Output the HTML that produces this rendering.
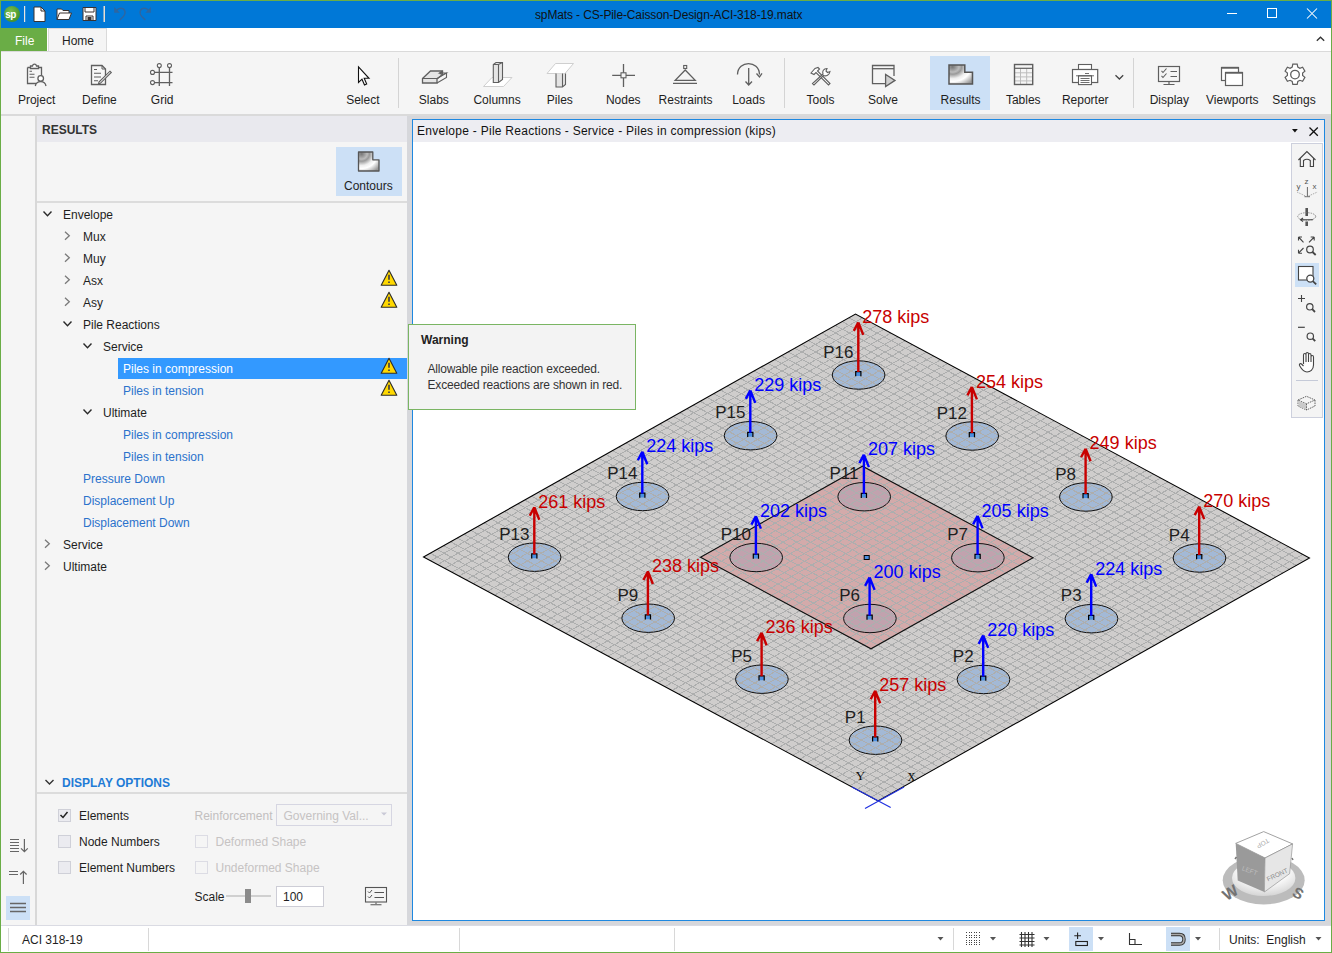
<!DOCTYPE html>
<html><head><meta charset="utf-8">
<style>
*{box-sizing:border-box;margin:0;padding:0}
html,body{width:1332px;height:953px;overflow:hidden}
body{position:relative;background:#6aad46;font-family:"Liberation Sans",sans-serif;font-size:12px;color:#1e1e1e}
.a{position:absolute}
.t{position:absolute;white-space:nowrap;line-height:1}
svg{position:absolute;overflow:visible}
</style></head><body>
<!-- title bar -->
<div class="a" style="left:1px;top:1px;width:1330px;height:27px;background:#0078d7"></div>
<div class="t" style="left:535px;top:9px;font-size:12px;color:#111;letter-spacing:-0.13px">spMats - CS-Pile-Caisson-Design-ACI-318-19.matx</div>

<!-- titlebar icons -->
<svg style="left:0;top:0" width="160" height="28">
 <defs><radialGradient id="lg" cx="0.4" cy="0.35" r="0.7"><stop offset="0" stop-color="#7cc04f"/><stop offset="1" stop-color="#3f8f2a"/></radialGradient></defs>
 <circle cx="12" cy="14" r="8" fill="url(#lg)"/>
 <text x="5.2" y="17.5" font-size="10" font-weight="bold" fill="#fff" letter-spacing="-0.6">sp</text>
 <rect x="24" y="6" width="1.2" height="16" fill="#e8e4e0"/>
 <path d="M34 7H41L45 11V21.5H34Z" fill="#fff" stroke="#3a3330" stroke-width="1"/>
 <path d="M41 7V11H45" fill="none" stroke="#3a3330" stroke-width="1"/>
 <path d="M57 19.5V9H61.5L63 10.5H69V13" fill="#fff" stroke="#3a3330" stroke-width="1"/>
 <path d="M57 19.5L59.5 13H71.5L69 19.5Z" fill="#fff" stroke="#3a3330" stroke-width="1"/>
 <path d="M83 7.5H96V20.5H83Z" fill="#fff" stroke="#3a3330" stroke-width="1"/>
 <path d="M85 7.5V12H94V7.5M86 20.5V16H93V20.5" fill="none" stroke="#3a3330" stroke-width="1"/>
 <rect x="87.5" y="17" width="4" height="3.5" fill="#3a3330"/>
 <rect x="103.5" y="6" width="1.5" height="16" fill="#e8dcd0"/>
 <path d="M119.8 20L123.3 16.5C126.5 13 125 8.3 120.6 8.3C118.6 8.3 117.3 9.5 116.3 10.8" fill="none" stroke="#2e66a0" stroke-width="1.4"/>
 <path d="M114.2 7V12.8H119.8Z" fill="#2e66a0"/>
 <path d="M145.3 20L141.8 16.5C138.6 13 140.1 8.3 144.5 8.3C146.5 8.3 147.8 9.5 148.8 10.8" fill="none" stroke="#2e66a0" stroke-width="1.4"/>
 <path d="M150.9 7V12.8H145.3Z" fill="#2e66a0"/>
</svg>
<svg style="left:1220px;top:0" width="112" height="28">
 <path d="M7 13.5H17" stroke="#fff" stroke-width="1"/>
 <rect x="47.5" y="8.5" width="9" height="9" fill="none" stroke="#fff" stroke-width="1"/>
 <path d="M87 8.5L97 18.5M97 8.5L87 18.5" stroke="#fff" stroke-width="1.05"/>
</svg>
<!-- tab row -->
<div class="a" style="left:1px;top:28px;width:1330px;height:23px;background:#fff"></div>
<div class="a" style="left:1px;top:28px;width:46px;height:23px;background:#6aad46"></div>
<div class="t" style="left:15px;top:35px;color:#fff;font-size:12px">File</div>
<div class="a" style="left:48px;top:28px;width:59px;height:24px;background:#f5f5f5;border:1px solid #dadada;border-bottom:none"></div>
<div class="t" style="left:62px;top:35px;font-size:12px">Home</div>
<svg style="left:1310px;top:28px" width="20" height="23">
 <path d="M6.8 12.8L10.5 9.2L14.2 12.8" fill="none" stroke="#333" stroke-width="1.3"/>
</svg>
<!-- ribbon -->
<div class="a" style="left:1px;top:51px;width:1330px;height:63px;background:#f5f5f5;border-top:1px solid #dadada"></div>
<div class="a" style="left:1px;top:114px;width:1330px;height:2px;background:#dadada"></div>

<!-- ribbon content -->
<div class="a" style="left:930px;top:56px;width:60px;height:54px;background:#cce0f6"></div>
<div class="a" style="left:398px;top:58px;width:1px;height:50px;background:#d4d4d4"></div>
<div class="a" style="left:784px;top:58px;width:1px;height:50px;background:#d4d4d4"></div>
<div class="a" style="left:1133px;top:58px;width:1px;height:50px;background:#d4d4d4"></div>
<div class="t" style="left:17.9px;top:94px">Project</div>
<div class="t" style="left:82.1px;top:94px">Define</div>
<div class="t" style="left:150.8px;top:94px">Grid</div>
<div class="t" style="left:346.2px;top:94px">Select</div>
<div class="t" style="left:418.8px;top:94px">Slabs</div>
<div class="t" style="left:473.4px;top:94px">Columns</div>
<div class="t" style="left:546.8px;top:94px">Piles</div>
<div class="t" style="left:605.9px;top:94px">Nodes</div>
<div class="t" style="left:658.6px;top:94px">Restraints</div>
<div class="t" style="left:732.2px;top:94px">Loads</div>
<div class="t" style="left:806.5px;top:94px">Tools</div>
<div class="t" style="left:868.0px;top:94px">Solve</div>
<div class="t" style="left:940.6px;top:94px">Results</div>
<div class="t" style="left:1005.9px;top:94px">Tables</div>
<div class="t" style="left:1061.9px;top:94px">Reporter</div>
<div class="t" style="left:1149.7px;top:94px">Display</div>
<div class="t" style="left:1206.0px;top:94px">Viewports</div>
<div class="t" style="left:1272.3px;top:94px">Settings</div>
<svg style="left:0;top:0" width="1332" height="116" fill="none" stroke="#5f5f5f" stroke-width="1.3">
 <!-- project -->
 <path d="M27.5 67.5H30.5M38.5 67.5H41.5V77M36 83.5H27.5V67.5" />
 <path d="M30.5 68.5V66H32.5C33 63.5 36 63.5 36.5 66H38.5V68.5Z" fill="#fff"/>
 <path d="M29.5 71.2H32M29.5 74.2H34.5M29.5 77.2H34.5" stroke-width="1.1"/>
 <circle cx="40.7" cy="78.4" r="2.8" fill="#fff"/>
 <path d="M35.3 86C36 82.5 38.5 81.7 40.7 81.7C43 81.7 45.3 82.5 46 86"/>
 <!-- define -->
 <path d="M91.5 65.5H102L105.5 69V84.5H91.5Z" fill="#f7f7f7"/>
 <path d="M102 65.5V69H105.5" stroke-width="1"/>
 <path d="M94 69.5H97M94 73.2H101M94 77H101M94 80.8H98" stroke-width="1.1"/>
 <path d="M99 82L110 71.2L111.3 72.5L100.3 83.3L98.5 83.8Z" fill="#fff" stroke-width="1.1"/>
 <!-- grid -->
 <path d="M159.3 68V86M169.5 68V86M154.5 72.4H172.5M154.5 82.6H172.5"/>
 <circle cx="159.3" cy="65.6" r="2" fill="#fff" stroke-width="1.1"/>
 <circle cx="169.5" cy="65.6" r="2" fill="#fff" stroke-width="1.1"/>
 <circle cx="152.5" cy="72.4" r="2" fill="#fff" stroke-width="1.1"/>
 <circle cx="152.5" cy="82.6" r="2" fill="#fff" stroke-width="1.1"/>
 <!-- select -->
 <path d="M358.5 67V82.5L362 79.2L364.5 85L366.7 84L364.2 78.3H369Z" fill="#fff" stroke="#111" stroke-width="1.1"/>
 <!-- slabs -->
 <path d="M422.5 78.5L430.5 71H442.5V74.5L437 79V83H422.5Z" fill="#e4e4e4"/>
 <path d="M422.5 78.5H437L446.5 73V77.5L437 83M437 79V78.5M442.5 71V74.5L439.5 73.5M437 78.5L446.5 73H439.5L442.5 71" fill="none" stroke-width="1.1"/>
 <!-- columns -->
 <path d="M483.5 86.5L492 77.5H512L503.5 86.5Z" fill="#fff" stroke="#cfcfcf" stroke-width="1"/>
 <path d="M493.3 64.5V82.5H498.5L502.5 79.5V62.5H496Z" fill="#e4e4e4" stroke-width="1.1"/>
 <path d="M493.3 64.5H498.5L502.5 62.5M498.5 64.5V82.5" stroke-width="1.1"/>
 <!-- piles -->
 <path d="M547 73.5L555.5 63.5H573.5L565 73.5Z" fill="#fff" stroke="#cfcfcf" stroke-width="1"/>
 <path d="M556 73.5V87H562.5L565.5 84.5V73.5" fill="#e4e4e4" stroke-width="1.1"/>
 <path d="M562.5 73.5V87" stroke-width="1.1"/>
 <!-- nodes -->
 <path d="M623.5 64V72.8M623.5 78V87M612.2 75.4H621M626 75.4H635"/>
 <rect x="621" y="72.8" width="5" height="5" stroke-width="1.1"/>
 <!-- restraints -->
 <rect x="683.7" y="65.5" width="3" height="3" stroke-width="1.1"/>
 <path d="M685.2 70L675.2 80.3H695.2Z M673 83.4H697"/>
 <!-- loads -->
 <path d="M737.5 74.5C738 60 759 60 759.5 74.5" />
 <path d="M756.5 73.5L759.5 77L762 73.3M748.7 68V84.5M745.5 81.5L748.7 85L752 81.5"/>
 <!-- tools -->
 <path d="M811 73L815 68.5L818 67.5L819.5 69L817.5 71L830 83.5L828.5 85L816 72.5L814 74.5Z" fill="#fff" stroke-width="1.1"/>
 <path d="M812.5 83.5L814 85L823.5 75.5C826 76.5 829.5 75 830 71.5L827.5 72.5L826 71L827 68.5C823.5 68.5 822 71.5 823 74Z" fill="#fff" stroke-width="1.1"/>
 <!-- solve -->
 <path d="M885.5 83.7H872.5V65.5H894V76" />
 <path d="M872.5 68.7H894" />
 <path d="M885.6 74.4V86.5L895 80.4Z" fill="#cfcfcf"/>
 <!-- results -->
 <defs><radialGradient id="rg" cx="0.15" cy="0.1" r="1.1"><stop offset="0" stop-color="#777"/><stop offset="0.25" stop-color="#bbb"/><stop offset="0.35" stop-color="#999"/><stop offset="0.55" stop-color="#eee"/><stop offset="0.7" stop-color="#fff"/><stop offset="0.85" stop-color="#ccc"/><stop offset="1" stop-color="#999"/></radialGradient></defs>
 <path d="M949 65H964.8V72.3H972.5V84H949Z" fill="url(#rg)" stroke="#555" stroke-width="1.5"/>
 <!-- tables -->
 <path d="M1020.5 68.5V84M1026.7 68.5V84M1014.5 72.8H1032.5M1014.5 76.9H1032.5M1014.5 80.9H1032.5" stroke="#bdbdbd" stroke-width="1"/>
 <rect x="1014.5" y="64.5" width="18.2" height="20" stroke-width="1.4"/>
 <path d="M1014.5 68.3H1032.5" stroke-width="1.2"/>
 <!-- reporter -->
 <rect x="1078.5" y="64.5" width="13" height="5" fill="#fff" stroke-width="1.1"/>
 <rect x="1072.5" y="69.5" width="25.2" height="13" fill="#fff" stroke-width="1.2"/>
 <rect x="1078.5" y="75.8" width="13" height="8.8" fill="#fff" stroke-width="1.1"/>
 <path d="M1076 75.8H1094M1085 73.5H1089M1080.5 78.5H1089.5M1080.5 80.5H1089.5M1080.5 82.5H1089.5" stroke-width="0.9"/>
 <path d="M1115.5 75.2L1119.4 79L1123.2 75.2" stroke="#444" stroke-width="1.3"/>
 <!-- display -->
 <rect x="1158.5" y="66.5" width="21" height="15" stroke-width="1.2"/>
 <path d="M1169 82V84M1163.5 84.5H1174.5M1170.5 71.5H1177M1170.5 76.5H1177" stroke-width="1.2"/>
 <path d="M1161.5 70.8L1163 72.5L1166.5 68.5M1161.5 75.8L1163 77.5L1166.5 73.5" stroke-width="1.1"/>
 <!-- viewports -->
 <rect x="1221.5" y="67.5" width="17" height="13" fill="#fff" stroke-width="1.2"/>
 <path d="M1221.5 67.8H1238.5" stroke-width="1.8"/>
 <rect x="1225.5" y="72.5" width="17" height="13" fill="#fff" stroke-width="1.2"/>
 <path d="M1225.5 72.8H1242.5" stroke-width="1.8"/>
 <!-- settings -->
 <path d="M1292.8 64.2H1297.2L1297.8 67.1L1299.9 68.3L1302.6 67.3L1304.9 71.1L1302.6 73.0V75.5L1304.9 77.4L1302.6 81.3L1299.9 80.3L1297.8 81.5L1297.2 84.4H1292.8L1292.2 81.5L1290.1 80.3L1287.4 81.3L1285.1 77.4L1287.4 75.5V73.0L1285.1 71.1L1287.4 67.3L1290.1 68.3L1292.2 67.1Z" fill="#fff" stroke-width="1.2"/>
 <circle cx="1295" cy="74.6" r="4.3" stroke-width="1.3"/>
</svg>
<!-- workspace grey -->
<div class="a" style="left:1px;top:116px;width:1330px;height:809px;background:#d6d7db"></div>
<!-- left strip -->
<div class="a" style="left:1px;top:116px;width:34px;height:809px;background:#f5f5f5"></div>
<!-- panel -->
<div class="a" style="left:37px;top:116px;width:370px;height:809px;background:#f5f5f5"></div>
<div class="a" style="left:37px;top:116px;width:370px;height:26px;background:#e9e9ee"></div>
<div class="t" style="left:42px;top:124px;font-weight:bold;font-size:12px;color:#333">RESULTS</div>
<!-- panel content -->
<div class="a" style="left:336px;top:147px;width:66px;height:49px;background:#cce0f6"></div>
<div class="t" style="left:344px;top:179.5px">Contours</div>
<div class="a" style="left:37px;top:201px;width:370px;height:2px;background:#dcdcdc"></div>
<div class="t" style="left:63px;top:208.8px;color:#1e1e1e">Envelope</div>
<div class="t" style="left:83px;top:230.8px;color:#1e1e1e">Mux</div>
<div class="t" style="left:83px;top:252.8px;color:#1e1e1e">Muy</div>
<div class="t" style="left:83px;top:274.8px;color:#1e1e1e">Asx</div>
<div class="t" style="left:83px;top:296.8px;color:#1e1e1e">Asy</div>
<div class="t" style="left:83px;top:318.8px;color:#1e1e1e">Pile Reactions</div>
<div class="t" style="left:103px;top:340.8px;color:#1e1e1e">Service</div>
<div class="a" style="left:118px;top:358px;width:289px;height:21px;background:#3399ff"></div>
<div class="t" style="left:123px;top:362.8px;color:#fff">Piles in compression</div>
<div class="t" style="left:123px;top:384.8px;color:#2b72cc">Piles in tension</div>
<div class="t" style="left:103px;top:406.8px;color:#1e1e1e">Ultimate</div>
<div class="t" style="left:123px;top:428.8px;color:#2b72cc">Piles in compression</div>
<div class="t" style="left:123px;top:450.8px;color:#2b72cc">Piles in tension</div>
<div class="t" style="left:83px;top:472.8px;color:#2b72cc">Pressure Down</div>
<div class="t" style="left:83px;top:494.8px;color:#2b72cc">Displacement Up</div>
<div class="t" style="left:83px;top:516.8px;color:#2b72cc">Displacement Down</div>
<div class="t" style="left:63px;top:538.8px;color:#1e1e1e">Service</div>
<div class="t" style="left:63px;top:560.8px;color:#1e1e1e">Ultimate</div>
<svg style="left:0;top:0" width="410" height="600" fill="none">
<defs><radialGradient id="rg2" cx="0.15" cy="0.1" r="1.1"><stop offset="0" stop-color="#777"/><stop offset="0.25" stop-color="#bbb"/><stop offset="0.35" stop-color="#999"/><stop offset="0.55" stop-color="#eee"/><stop offset="0.7" stop-color="#fff"/><stop offset="0.85" stop-color="#ccc"/><stop offset="1" stop-color="#999"/></radialGradient></defs>
<path d="M358.5 152H372.8V159.8H379V171H358.5Z" fill="url(#rg2)" stroke="#555" stroke-width="1.3" stroke-linejoin="round"/>
<path d="M43.5 211.5L47.5 215.7L51.5 211.5" stroke="#2a2a2a" stroke-width="1.4"/>
<path d="M65.0 231.7L69.3 235.7L65.0 239.7" stroke="#7a7a7a" stroke-width="1.3"/>
<path d="M65.0 253.7L69.3 257.7L65.0 261.7" stroke="#7a7a7a" stroke-width="1.3"/>
<path d="M65.0 275.7L69.3 279.7L65.0 283.7" stroke="#7a7a7a" stroke-width="1.3"/>
<path d="M389 270.3L396.8 285.3H381.2Z" fill="#ffd800" stroke="#2b2b2b" stroke-width="1.1" stroke-linejoin="round"/>
<path d="M389 274.7V279.7M389 281.6V283.0" stroke="#1d2350" stroke-width="1.4"/>
<path d="M65.0 297.7L69.3 301.7L65.0 305.7" stroke="#7a7a7a" stroke-width="1.3"/>
<path d="M389 292.3L396.8 307.3H381.2Z" fill="#ffd800" stroke="#2b2b2b" stroke-width="1.1" stroke-linejoin="round"/>
<path d="M389 296.7V301.7M389 303.6V305.0" stroke="#1d2350" stroke-width="1.4"/>
<path d="M63.5 321.5L67.5 325.7L71.5 321.5" stroke="#2a2a2a" stroke-width="1.4"/>
<path d="M83.5 343.5L87.5 347.7L91.5 343.5" stroke="#2a2a2a" stroke-width="1.4"/>
<path d="M389 358.3L396.8 373.3H381.2Z" fill="#ffd800" stroke="#2b2b2b" stroke-width="1.1" stroke-linejoin="round"/>
<path d="M389 362.7V367.7M389 369.6V371.0" stroke="#1d2350" stroke-width="1.4"/>
<path d="M389 380.3L396.8 395.3H381.2Z" fill="#ffd800" stroke="#2b2b2b" stroke-width="1.1" stroke-linejoin="round"/>
<path d="M389 384.7V389.7M389 391.6V393.0" stroke="#1d2350" stroke-width="1.4"/>
<path d="M83.5 409.5L87.5 413.7L91.5 409.5" stroke="#2a2a2a" stroke-width="1.4"/>
<path d="M45.0 539.7L49.3 543.7L45.0 547.7" stroke="#7a7a7a" stroke-width="1.3"/>
<path d="M45.0 561.7L49.3 565.7L45.0 569.7" stroke="#7a7a7a" stroke-width="1.3"/>
</svg>

<!-- display options -->
<div class="t" style="left:62px;top:776.5px;font-weight:bold;color:#1f7bd6">DISPLAY OPTIONS</div>
<div class="a" style="left:37px;top:792px;width:370px;height:2px;background:#dcdcdc"></div>
<div class="a" style="left:58px;top:808.5px;width:13px;height:13px;background:#ebebf0;border:1px solid #cfd0d8"></div>
<div class="a" style="left:58px;top:834.5px;width:13px;height:13px;background:#ebebf0;border:1px solid #cfd0d8"></div>
<div class="a" style="left:58px;top:860.5px;width:13px;height:13px;background:#ebebf0;border:1px solid #cfd0d8"></div>
<div class="t" style="left:79px;top:809.8px">Elements</div>
<div class="t" style="left:79px;top:835.5px">Node Numbers</div>
<div class="t" style="left:79px;top:862.3px">Element Numbers</div>
<div class="t" style="left:194.5px;top:809.7px;color:#c2bfbf">Reinforcement</div>
<div class="a" style="left:276px;top:804px;width:116px;height:22px;border:1px solid #d6d6e2"></div>
<div class="t" style="left:283.5px;top:809.7px;color:#c6c3c3">Governing Val...</div>
<div class="a" style="left:195px;top:834.5px;width:13px;height:13px;border:1px solid #dcdce4"></div>
<div class="a" style="left:195px;top:860.5px;width:13px;height:13px;border:1px solid #dcdce4"></div>
<div class="t" style="left:215.5px;top:836.3px;color:#c6c3c3">Deformed Shape</div>
<div class="t" style="left:215.5px;top:861.5px;color:#c6c3c3">Undeformed Shape</div>
<div class="t" style="left:194.5px;top:890.5px">Scale</div>
<div class="a" style="left:226px;top:895px;width:45px;height:2px;background:#d0d0d0"></div>
<div class="a" style="left:245px;top:889px;width:6px;height:14px;background:#8b8b8b"></div>
<div class="a" style="left:276px;top:885.5px;width:48px;height:21.5px;background:#fff;border:1px solid #cdcdd6"></div>
<div class="t" style="left:283px;top:890.5px">100</div>
<!-- left strip -->
<div class="a" style="left:6px;top:896px;width:24px;height:24px;background:#cce0f6"></div>
<svg style="left:0;top:760px" width="410" height="170" fill="none">
 <path d="M45.5 20L49.5 24L53.5 20" stroke="#333" stroke-width="1.4"/>
 <path d="M60.5 55L63 57.5L67.5 52" stroke="#222" stroke-width="1.5"/>
 <path d="M381 52.5L384 55.5L387 52.5Z" fill="#c9c9d6"/>
 <path d="M10 79.5H19M10 82.5H19M10 85.5H19M10 88.5H19M10 91.5H19" stroke="#666" stroke-width="1.2"/>
 <path d="M24.4 79V92M21 88.3L24.4 91.7L27.8 88.3" stroke="#666" stroke-width="1.2"/>
 <path d="M9 111.5H18M9 114.5H18" stroke="#666" stroke-width="1.2"/>
 <path d="M23.4 111.5V124M20.2 114.5L23.4 111.3L26.6 114.5" stroke="#666" stroke-width="1.2"/>
 <path d="M10 143.5H26M10 147.5H26M10 151.5H26" stroke="#666" stroke-width="1.4"/>
 <rect x="365.5" y="127.5" width="21" height="14.5" stroke="#555" stroke-width="1.1"/>
 <path d="M376 142.5V144M370.5 144.8H381.5M374.5 132.5H384M374.5 137.5H384" stroke="#555" stroke-width="1.1"/>
 <path d="M368 131.5L369.5 133L372 130M368 136.5L369.5 138L372 135" stroke="#555" stroke-width="1"/>
</svg>
<div class="a" style="left:35px;top:116px;width:2px;height:809px;background:#d8d8d8"></div>
<!-- viewport -->
<div class="a" style="left:412px;top:119px;width:913px;height:802px;background:#fff;border:1px solid #1e88e0"></div>
<div class="a" style="left:413px;top:120px;width:911px;height:22px;background:#ededf2"></div>
<div class="t" style="left:417px;top:125px;font-size:12px;color:#111;letter-spacing:0.27px">Envelope - Pile Reactions - Service - Piles in compression (kips)</div>
<svg width="1332" height="953" style="left:0;top:0" viewBox="0 0 1332 953">
<defs><clipPath id="slab"><polygon points="423.5,557.0 855.5,314.0 1309.5,558.0 878.0,801.0"/></clipPath></defs>
<polygon points="423.5,557.0 855.5,314.0 1309.5,558.0 878.0,801.0" fill="#cfcdcc"/>
<ellipse cx="534.6" cy="557.2" rx="26.3" ry="14.2" fill="#a3b9d6"/>
<ellipse cx="642.6" cy="496.5" rx="26.3" ry="14.2" fill="#a3b9d6"/>
<ellipse cx="750.6" cy="435.7" rx="26.3" ry="14.2" fill="#a3b9d6"/>
<ellipse cx="858.6" cy="375.0" rx="26.3" ry="14.2" fill="#a3b9d6"/>
<ellipse cx="648.2" cy="618.2" rx="26.3" ry="14.2" fill="#a3b9d6"/>
<ellipse cx="756.2" cy="557.5" rx="26.3" ry="14.2" fill="#a3b9d6"/>
<ellipse cx="864.2" cy="496.7" rx="26.3" ry="14.2" fill="#a3b9d6"/>
<ellipse cx="972.2" cy="436.0" rx="26.3" ry="14.2" fill="#a3b9d6"/>
<ellipse cx="761.9" cy="679.2" rx="26.3" ry="14.2" fill="#a3b9d6"/>
<ellipse cx="869.9" cy="618.5" rx="26.3" ry="14.2" fill="#a3b9d6"/>
<ellipse cx="977.9" cy="557.7" rx="26.3" ry="14.2" fill="#a3b9d6"/>
<ellipse cx="1085.9" cy="497.0" rx="26.3" ry="14.2" fill="#a3b9d6"/>
<ellipse cx="875.5" cy="740.2" rx="26.3" ry="14.2" fill="#a3b9d6"/>
<ellipse cx="983.5" cy="679.5" rx="26.3" ry="14.2" fill="#a3b9d6"/>
<ellipse cx="1091.5" cy="618.7" rx="26.3" ry="14.2" fill="#a3b9d6"/>
<ellipse cx="1199.5" cy="558.0" rx="26.3" ry="14.2" fill="#a3b9d6"/>
<polygon points="700.5,557.3 862.5,466.2 1033.0,557.7 871.0,648.8" fill="#d69393" fill-opacity="0.6"/>
<path d="M430.60 560.81L862.60 317.81M430.25 553.20L884.75 797.20M437.70 564.62L869.70 321.62M437.00 549.41L891.50 793.41M444.80 568.44L876.80 325.44M443.75 545.61L898.25 789.61M451.91 572.25L883.91 329.25M450.50 541.81L905.00 785.81M459.01 576.06L891.01 333.06M457.25 538.02L911.75 782.02M466.11 579.88L898.11 336.88M464.00 534.22L918.50 778.22M473.21 583.69L905.21 340.69M470.75 530.42L925.25 774.42M480.31 587.50L912.31 344.50M477.50 526.62L932.00 770.62M487.41 591.31L919.41 348.31M484.25 522.83L938.75 766.83M494.52 595.12L926.52 352.12M491.00 519.03L945.50 763.03M501.62 598.94L933.62 355.94M497.75 515.23L952.25 759.23M508.72 602.75L940.72 359.75M504.50 511.44L959.00 755.44M515.82 606.56L947.82 363.56M511.25 507.64L965.75 751.64M522.92 610.38L954.92 367.38M518.00 503.84L972.50 747.84M530.02 614.19L962.02 371.19M524.75 500.05L979.25 744.05M537.12 618.00L969.12 375.00M531.50 496.25L986.00 740.25M544.23 621.81L976.23 378.81M538.25 492.45L992.75 736.45M551.33 625.62L983.33 382.62M545.00 488.66L999.50 732.66M558.43 629.44L990.43 386.44M551.75 484.86L1006.25 728.86M565.53 633.25L997.53 390.25M558.50 481.06L1013.00 725.06M572.63 637.06L1004.63 394.06M565.25 477.27L1019.75 721.27M579.73 640.88L1011.73 397.88M572.00 473.47L1026.50 717.47M586.84 644.69L1018.84 401.69M578.75 469.67L1033.25 713.67M593.94 648.50L1025.94 405.50M585.50 465.88L1040.00 709.88M601.04 652.31L1033.04 409.31M592.25 462.08L1046.75 706.08M608.14 656.12L1040.14 413.12M599.00 458.28L1053.50 702.28M615.24 659.94L1047.24 416.94M605.75 454.48L1060.25 698.48M622.34 663.75L1054.34 420.75M612.50 450.69L1067.00 694.69M629.45 667.56L1061.45 424.56M619.25 446.89L1073.75 690.89M636.55 671.38L1068.55 428.38M626.00 443.09L1080.50 687.09M643.65 675.19L1075.65 432.19M632.75 439.30L1087.25 683.30M650.75 679.00L1082.75 436.00M639.50 435.50L1094.00 679.50M657.85 682.81L1089.85 439.81M646.25 431.70L1100.75 675.70M664.95 686.62L1096.95 443.62M653.00 427.91L1107.50 671.91M672.05 690.44L1104.05 447.44M659.75 424.11L1114.25 668.11M679.16 694.25L1111.16 451.25M666.50 420.31L1121.00 664.31M686.26 698.06L1118.26 455.06M673.25 416.52L1127.75 660.52M693.36 701.88L1125.36 458.88M680.00 412.72L1134.50 656.72M700.46 705.69L1132.46 462.69M686.75 408.92L1141.25 652.92M707.56 709.50L1139.56 466.50M693.50 405.12L1148.00 649.12M714.66 713.31L1146.66 470.31M700.25 401.33L1154.75 645.33M721.77 717.12L1153.77 474.12M707.00 397.53L1161.50 641.53M728.87 720.94L1160.87 477.94M713.75 393.73L1168.25 637.73M735.97 724.75L1167.97 481.75M720.50 389.94L1175.00 633.94M743.07 728.56L1175.07 485.56M727.25 386.14L1181.75 630.14M750.17 732.38L1182.17 489.38M734.00 382.34L1188.50 626.34M757.27 736.19L1189.27 493.19M740.75 378.55L1195.25 622.55M764.38 740.00L1196.38 497.00M747.50 374.75L1202.00 618.75M771.48 743.81L1203.48 500.81M754.25 370.95L1208.75 614.95M778.58 747.62L1210.58 504.62M761.00 367.16L1215.50 611.16M785.68 751.44L1217.68 508.44M767.75 363.36L1222.25 607.36M792.78 755.25L1224.78 512.25M774.50 359.56L1229.00 603.56M799.88 759.06L1231.88 516.06M781.25 355.77L1235.75 599.77M806.98 762.88L1238.98 519.88M788.00 351.97L1242.50 595.97M814.09 766.69L1246.09 523.69M794.75 348.17L1249.25 592.17M821.19 770.50L1253.19 527.50M801.50 344.38L1256.00 588.38M828.29 774.31L1260.29 531.31M808.25 340.58L1262.75 584.58M835.39 778.12L1267.39 535.12M815.00 336.78L1269.50 580.78M842.49 781.94L1274.49 538.94M821.75 332.98L1276.25 576.98M849.59 785.75L1281.59 542.75M828.50 329.19L1283.00 573.19M856.70 789.56L1288.70 546.56M835.25 325.39L1289.75 569.39M863.80 793.38L1295.80 550.38M842.00 321.59L1296.50 565.59M870.90 797.19L1302.90 554.19M848.75 317.80L1303.25 561.80" stroke="#adaeae" stroke-width="1" fill="none" shape-rendering="crispEdges"/>
<polygon points="700.5,557.3 862.5,466.2 1033.0,557.7 871.0,648.8" fill="none" stroke="#111" stroke-width="1.1"/>
<ellipse cx="534.6" cy="557.2" rx="26.3" ry="14.2" fill="none" stroke="#111" stroke-width="1"/>
<ellipse cx="642.6" cy="496.5" rx="26.3" ry="14.2" fill="none" stroke="#111" stroke-width="1"/>
<ellipse cx="750.6" cy="435.7" rx="26.3" ry="14.2" fill="none" stroke="#111" stroke-width="1"/>
<ellipse cx="858.6" cy="375.0" rx="26.3" ry="14.2" fill="none" stroke="#111" stroke-width="1"/>
<ellipse cx="648.2" cy="618.2" rx="26.3" ry="14.2" fill="none" stroke="#111" stroke-width="1"/>
<ellipse cx="756.2" cy="557.5" rx="26.3" ry="14.2" fill="none" stroke="#111" stroke-width="1"/>
<ellipse cx="864.2" cy="496.7" rx="26.3" ry="14.2" fill="none" stroke="#111" stroke-width="1"/>
<ellipse cx="972.2" cy="436.0" rx="26.3" ry="14.2" fill="none" stroke="#111" stroke-width="1"/>
<ellipse cx="761.9" cy="679.2" rx="26.3" ry="14.2" fill="none" stroke="#111" stroke-width="1"/>
<ellipse cx="869.9" cy="618.5" rx="26.3" ry="14.2" fill="none" stroke="#111" stroke-width="1"/>
<ellipse cx="977.9" cy="557.7" rx="26.3" ry="14.2" fill="none" stroke="#111" stroke-width="1"/>
<ellipse cx="1085.9" cy="497.0" rx="26.3" ry="14.2" fill="none" stroke="#111" stroke-width="1"/>
<ellipse cx="875.5" cy="740.2" rx="26.3" ry="14.2" fill="none" stroke="#111" stroke-width="1"/>
<ellipse cx="983.5" cy="679.5" rx="26.3" ry="14.2" fill="none" stroke="#111" stroke-width="1"/>
<ellipse cx="1091.5" cy="618.7" rx="26.3" ry="14.2" fill="none" stroke="#111" stroke-width="1"/>
<ellipse cx="1199.5" cy="558.0" rx="26.3" ry="14.2" fill="none" stroke="#111" stroke-width="1"/>
<polygon points="423.5,557.0 855.5,314.0 1309.5,558.0 878.0,801.0" fill="none" stroke="#000" stroke-width="1.05"/>
<rect x="864.2" y="555.5" width="5" height="4" fill="#4a8fe0" stroke="#000" stroke-width="1"/>
<rect x="531.8" y="554.2" width="5" height="4" fill="#4a8fe0"/><path d="M531.7 558.4V553.8H536.9V558.4" fill="none" stroke="#000" stroke-width="1.2"/>
<path d="M534.3 554.2V508.2 M529.8 515.7L534.3 507.2 M534.3 507.2L539.3 519.7" stroke="#c80000" stroke-width="2.4" fill="none"/>
<rect x="639.8" y="493.5" width="5" height="4" fill="#4a8fe0"/><path d="M639.7 497.7V493.1H644.9V497.7" fill="none" stroke="#000" stroke-width="1.2"/>
<path d="M642.3 493.5V452.8 M637.8 460.3L642.3 451.8 M642.3 451.8L647.3 464.3" stroke="#0000ff" stroke-width="2.4" fill="none"/>
<rect x="747.8" y="432.7" width="5" height="4" fill="#4a8fe0"/><path d="M747.7 436.9V432.3H752.9V436.9" fill="none" stroke="#000" stroke-width="1.2"/>
<path d="M750.3 432.7V391.4 M745.8 398.9L750.3 390.4 M750.3 390.4L755.3 402.9" stroke="#0000ff" stroke-width="2.4" fill="none"/>
<rect x="855.8" y="372.0" width="5" height="4" fill="#4a8fe0"/><path d="M855.7 376.2V371.6H860.9V376.2" fill="none" stroke="#000" stroke-width="1.2"/>
<path d="M858.3 372.0V323.4 M853.8 330.9L858.3 322.4 M858.3 322.4L863.3 334.9" stroke="#c80000" stroke-width="2.4" fill="none"/>
<rect x="645.4" y="615.2" width="5" height="4" fill="#4a8fe0"/><path d="M645.3 619.4V614.8H650.5V619.4" fill="none" stroke="#000" stroke-width="1.2"/>
<path d="M647.9 615.2V572.5 M643.4 580.0L647.9 571.5 M647.9 571.5L652.9 584.0" stroke="#c80000" stroke-width="2.4" fill="none"/>
<rect x="753.4" y="554.5" width="5" height="4" fill="#4a8fe0"/><path d="M753.3 558.7V554.1H758.5V558.7" fill="none" stroke="#000" stroke-width="1.2"/>
<path d="M755.9 554.5V517.1 M751.4 524.6L755.9 516.1 M755.9 516.1L760.9 528.6" stroke="#0000ff" stroke-width="2.4" fill="none"/>
<rect x="861.4" y="493.7" width="5" height="4" fill="#4a8fe0"/><path d="M861.3 497.9V493.3H866.5V497.9" fill="none" stroke="#000" stroke-width="1.2"/>
<path d="M863.9 493.7V455.6 M859.4 463.1L863.9 454.6 M863.9 454.6L868.9 467.1" stroke="#0000ff" stroke-width="2.4" fill="none"/>
<rect x="969.4" y="433.0" width="5" height="4" fill="#4a8fe0"/><path d="M969.3 437.2V432.6H974.5V437.2" fill="none" stroke="#000" stroke-width="1.2"/>
<path d="M971.9 433.0V387.9 M967.4 395.4L971.9 386.9 M971.9 386.9L976.9 399.4" stroke="#c80000" stroke-width="2.4" fill="none"/>
<rect x="759.1" y="676.2" width="5" height="4" fill="#4a8fe0"/><path d="M759.0 680.4V675.8H764.2V680.4" fill="none" stroke="#000" stroke-width="1.2"/>
<path d="M761.6 676.2V633.8 M757.1 641.3L761.6 632.8 M761.6 632.8L766.6 645.3" stroke="#c80000" stroke-width="2.4" fill="none"/>
<rect x="867.1" y="615.5" width="5" height="4" fill="#4a8fe0"/><path d="M867.0 619.7V615.1H872.2V619.7" fill="none" stroke="#000" stroke-width="1.2"/>
<path d="M869.6 615.5V578.4 M865.1 585.9L869.6 577.4 M869.6 577.4L874.6 589.9" stroke="#0000ff" stroke-width="2.4" fill="none"/>
<rect x="975.1" y="554.7" width="5" height="4" fill="#4a8fe0"/><path d="M975.0 558.9V554.3H980.2V558.9" fill="none" stroke="#000" stroke-width="1.2"/>
<path d="M977.6 554.7V516.9 M973.1 524.4L977.6 515.9 M977.6 515.9L982.6 528.4" stroke="#0000ff" stroke-width="2.4" fill="none"/>
<rect x="1083.1" y="494.0" width="5" height="4" fill="#4a8fe0"/><path d="M1083.0 498.2V493.6H1088.2V498.2" fill="none" stroke="#000" stroke-width="1.2"/>
<path d="M1085.6 494.0V449.7 M1081.1 457.2L1085.6 448.7 M1085.6 448.7L1090.6 461.2" stroke="#c80000" stroke-width="2.4" fill="none"/>
<rect x="872.7" y="737.2" width="5" height="4" fill="#4a8fe0"/><path d="M872.6 741.4V736.8H877.8V741.4" fill="none" stroke="#000" stroke-width="1.2"/>
<path d="M875.2 737.2V691.7 M870.7 699.2L875.2 690.7 M875.2 690.7L880.2 703.2" stroke="#c80000" stroke-width="2.4" fill="none"/>
<rect x="980.7" y="676.5" width="5" height="4" fill="#4a8fe0"/><path d="M980.6 680.7V676.1H985.8V680.7" fill="none" stroke="#000" stroke-width="1.2"/>
<path d="M983.2 676.5V636.4 M978.7 643.9L983.2 635.4 M983.2 635.4L988.2 647.9" stroke="#0000ff" stroke-width="2.4" fill="none"/>
<rect x="1088.7" y="615.7" width="5" height="4" fill="#4a8fe0"/><path d="M1088.6 619.9V615.3H1093.8V619.9" fill="none" stroke="#000" stroke-width="1.2"/>
<path d="M1091.2 615.7V575.1 M1086.7 582.6L1091.2 574.1 M1091.2 574.1L1096.2 586.6" stroke="#0000ff" stroke-width="2.4" fill="none"/>
<rect x="1196.7" y="555.0" width="5" height="4" fill="#4a8fe0"/><path d="M1196.6 559.2V554.6H1201.8V559.2" fill="none" stroke="#000" stroke-width="1.2"/>
<path d="M1199.2 555.0V507.6 M1194.7 515.1L1199.2 506.6 M1199.2 506.6L1204.2 519.1" stroke="#c80000" stroke-width="2.4" fill="none"/>
<text x="514.3" y="539.7" text-anchor="middle" font-size="17" fill="#1e1e1e">P13</text>
<text x="538.3" y="507.8" font-size="18" fill="#c80000">261 kips</text>
<text x="622.3" y="479.0" text-anchor="middle" font-size="17" fill="#1e1e1e">P14</text>
<text x="646.3" y="452.4" font-size="18" fill="#0000ff">224 kips</text>
<text x="730.3" y="418.2" text-anchor="middle" font-size="17" fill="#1e1e1e">P15</text>
<text x="754.3" y="391.0" font-size="18" fill="#0000ff">229 kips</text>
<text x="838.3" y="357.5" text-anchor="middle" font-size="17" fill="#1e1e1e">P16</text>
<text x="862.3" y="323.0" font-size="18" fill="#c80000">278 kips</text>
<text x="627.9" y="600.7" text-anchor="middle" font-size="17" fill="#1e1e1e">P9</text>
<text x="651.9" y="572.1" font-size="18" fill="#c80000">238 kips</text>
<text x="735.9" y="540.0" text-anchor="middle" font-size="17" fill="#1e1e1e">P10</text>
<text x="759.9" y="516.7" font-size="18" fill="#0000ff">202 kips</text>
<text x="843.9" y="479.2" text-anchor="middle" font-size="17" fill="#1e1e1e">P11</text>
<text x="867.9" y="455.2" font-size="18" fill="#0000ff">207 kips</text>
<text x="951.9" y="418.5" text-anchor="middle" font-size="17" fill="#1e1e1e">P12</text>
<text x="975.9" y="387.5" font-size="18" fill="#c80000">254 kips</text>
<text x="741.6" y="661.7" text-anchor="middle" font-size="17" fill="#1e1e1e">P5</text>
<text x="765.6" y="633.4" font-size="18" fill="#c80000">236 kips</text>
<text x="849.6" y="601.0" text-anchor="middle" font-size="17" fill="#1e1e1e">P6</text>
<text x="873.6" y="578.0" font-size="18" fill="#0000ff">200 kips</text>
<text x="957.6" y="540.2" text-anchor="middle" font-size="17" fill="#1e1e1e">P7</text>
<text x="981.6" y="516.5" font-size="18" fill="#0000ff">205 kips</text>
<text x="1065.6" y="479.5" text-anchor="middle" font-size="17" fill="#1e1e1e">P8</text>
<text x="1089.6" y="449.3" font-size="18" fill="#c80000">249 kips</text>
<text x="855.2" y="722.7" text-anchor="middle" font-size="17" fill="#1e1e1e">P1</text>
<text x="879.2" y="691.3" font-size="18" fill="#c80000">257 kips</text>
<text x="963.2" y="662.0" text-anchor="middle" font-size="17" fill="#1e1e1e">P2</text>
<text x="987.2" y="636.0" font-size="18" fill="#0000ff">220 kips</text>
<text x="1071.2" y="601.2" text-anchor="middle" font-size="17" fill="#1e1e1e">P3</text>
<text x="1095.2" y="574.7" font-size="18" fill="#0000ff">224 kips</text>
<text x="1179.2" y="540.5" text-anchor="middle" font-size="17" fill="#1e1e1e">P4</text>
<text x="1203.2" y="507.2" font-size="18" fill="#c80000">270 kips</text>
<path d="M865 808.5L904 787M852 787L890.7 807.5" stroke="#2030e0" stroke-width="1.2" fill="none"/>
<text x="855.5" y="780" font-family="Liberation Serif" font-size="13.5" fill="#111">Y</text>
<text x="907.5" y="781" font-family="Liberation Serif" font-size="16" fill="#111">x</text>
</svg>

<!-- viewport header icons + toolbar -->
<svg style="left:1280px;top:120px" width="52" height="300" fill="none">
 <path d="M12 9H17.8L14.9 12.6Z" fill="#111"/>
 <path d="M29.5 7.5L37.8 15.8M37.8 7.5L29.5 15.8" stroke="#111" stroke-width="1.3"/>
</svg>
<div class="a" style="left:1291px;top:143px;width:32px;height:275px;background:#f4f4f4;border:1px solid #cdd0dd"></div>
<div class="a" style="left:1295px;top:263px;width:24px;height:24px;background:#cce0f6"></div>
<div class="a" style="left:1296px;top:380px;width:22px;height:1px;background:#c5cad8"></div>
<svg style="left:0;top:0" width="1332" height="430" fill="none" stroke="#444" stroke-width="1.3">
 <path d="M1298.4 160L1306.9 151.5L1315.5 160M1300.3 158.3V166.5H1303.5V160.5Q1306.9 158 1310.3 160.5V166.5H1313.5V158.3" stroke-width="1.1"/>
 <text x="1304.5" y="184" font-size="8" fill="#555" stroke="none">z</text>
 <text x="1296.5" y="189" font-size="8" fill="#555" stroke="none">y</text>
 <text x="1312.5" y="189" font-size="8" fill="#555" stroke="none">x</text>
 <path d="M1307.4 187V196.7M1304.5 196.7H1310" stroke="#666" stroke-width="1"/>
 <path d="M1297 192L1307 196.7L1317.5 192" stroke="#999" stroke-width="0.8" stroke-dasharray="1.5 1"/>
 <path d="M1306.7 208V216M1306.7 221.5V226" stroke="#555" stroke-width="2.6"/>
 <ellipse cx="1306.7" cy="216.5" rx="9" ry="3.8" stroke="#777" stroke-width="0.8" stroke-dasharray="1.5 1"/>
 <path d="M1313 219.8H1301M1303 218L1300.5 219.8L1303 221.6" stroke="#444" stroke-width="1.1"/>
 <path d="M1298.5 237L1303.5 242.3M1298.5 237V240.5M1298.5 237H1302M1314.2 237L1309 242.3M1314.2 237V240.5M1314.2 237H1310.7M1298.5 253.2L1303.5 248M1298.5 253.2V249.7M1298.5 253.2H1302" stroke-width="1.1"/>
 <circle cx="1310" cy="249.5" r="3.3" stroke-width="1.2"/>
 <path d="M1312.5 252L1315.7 255" stroke-width="1.8"/>
 <rect x="1298.5" y="266.5" width="14.5" height="13.5" fill="#fff" stroke-width="1.1"/>
 <circle cx="1310.3" cy="278.6" r="3.5" fill="#fff" stroke-width="1.3"/>
 <path d="M1312.8 281.2L1316.2 284.3" stroke-width="1.8"/>
 <path d="M1298 298.5H1305M1301.5 295V302" stroke-width="1.1"/>
 <circle cx="1309.8" cy="306.8" r="3.2" stroke-width="1.2"/>
 <path d="M1312.2 309.2L1315 312" stroke-width="1.8"/>
 <path d="M1298 327.3H1304.8" stroke-width="1.2"/>
 <circle cx="1310.3" cy="336.2" r="3.2" stroke-width="1.2"/>
 <path d="M1312.7 338.6L1315.2 341.2" stroke-width="1.8"/>
 <path d="M1303.5 364V355C1303.5 353 1306 353 1306 355V362M1306 355V354C1306 352 1308.5 352 1308.5 354V362M1308.5 355C1308.5 353 1311 353 1311 355V362M1311 357C1311 355 1313.5 355 1313.5 357V365C1313.5 370 1310 372 1307 372C1304 372 1301.5 369 1299.5 365.5C1299 364 1300.5 363 1301.5 364L1303.5 366" fill="#fff" stroke-width="1.1"/>
 <path d="M1298 400L1306.5 396.3L1315 400L1306.5 403.8Z M1298 400V406L1306.5 410V403.8M1315 400V406L1306.5 410" stroke="#555" stroke-width="0.9" stroke-dasharray="1.6 0.9"/>
 <path d="M1298.5 400.5L1306 404V409.3L1298.5 405.7Z" fill="#c9c9c9" stroke="none"/>
</svg>
<!-- warning tooltip -->
<div class="a" style="left:408px;top:324px;width:228px;height:86px;background:#f3f3f3;border:1px solid #7ab563"></div>
<div class="t" style="left:421px;top:334px;font-weight:bold;color:#222">Warning</div>
<div class="t" style="left:427.5px;top:362.5px;color:#333;letter-spacing:-0.17px">Allowable pile reaction exceeded.</div>
<div class="t" style="left:427.5px;top:378.5px;color:#333;letter-spacing:-0.17px">Exceeded reactions are shown in red.</div>
<!-- status bar -->
<div class="a" style="left:1px;top:925px;width:1330px;height:27px;background:#fff;border-top:1px solid #dadbe3"></div>
<div class="t" style="left:22px;top:934px;font-size:12px">ACI 318-19</div>
<div class="t" style="left:1229px;top:934px;font-size:12px">Units:&nbsp; English</div>

<!-- status bar details -->
<div class="a" style="left:8px;top:928px;width:1px;height:23px;background:#d8d8d8"></div>
<div class="a" style="left:148px;top:928px;width:1px;height:23px;background:#d8d8d8"></div>
<div class="a" style="left:459px;top:928px;width:1px;height:23px;background:#d8d8d8"></div>
<div class="a" style="left:674px;top:928px;width:1px;height:23px;background:#d8d8d8"></div>
<div class="a" style="left:953px;top:928px;width:1px;height:22px;background:#d8d8d8"></div>
<div class="a" style="left:1219px;top:928px;width:1px;height:22px;background:#d8d8d8"></div>
<div class="a" style="left:1069px;top:927px;width:24px;height:24px;background:#cce0f6"></div>
<div class="a" style="left:1166px;top:927px;width:24px;height:24px;background:#cce0f6"></div>
<svg style="left:0;top:920px" width="1332" height="33" fill="none">
 <path d="M937.5 17H943.5L940.5 20.5Z M990 17H996L993 20.5Z M1043.5 17H1049.5L1046.5 20.5Z M1098 17H1104L1101 20.5Z M1195 17H1201L1198 20.5Z M1315.5 17H1321.5L1318.5 20.5Z" fill="#555"/>
<rect x="966" y="12" width="1" height="1" fill="#444"/><rect x="966" y="15" width="1" height="1" fill="#444"/><rect x="966" y="17" width="1" height="1" fill="#444"/><rect x="966" y="20" width="1" height="1" fill="#444"/><rect x="966" y="22" width="1" height="1" fill="#444"/><rect x="966" y="24" width="1" height="1" fill="#444"/><rect x="969" y="12" width="1" height="1" fill="#444"/><rect x="969" y="15" width="1" height="1" fill="#444"/><rect x="969" y="17" width="1" height="1" fill="#444"/><rect x="969" y="20" width="1" height="1" fill="#444"/><rect x="969" y="22" width="1" height="1" fill="#444"/><rect x="969" y="24" width="1" height="1" fill="#444"/><rect x="971" y="12" width="1" height="1" fill="#444"/><rect x="971" y="15" width="1" height="1" fill="#444"/><rect x="971" y="17" width="1" height="1" fill="#444"/><rect x="971" y="20" width="1" height="1" fill="#444"/><rect x="971" y="22" width="1" height="1" fill="#444"/><rect x="971" y="24" width="1" height="1" fill="#444"/><rect x="974" y="12" width="1" height="1" fill="#444"/><rect x="974" y="15" width="1" height="1" fill="#444"/><rect x="974" y="17" width="1" height="1" fill="#444"/><rect x="974" y="20" width="1" height="1" fill="#444"/><rect x="974" y="22" width="1" height="1" fill="#444"/><rect x="974" y="24" width="1" height="1" fill="#444"/><rect x="976" y="12" width="1" height="1" fill="#444"/><rect x="976" y="15" width="1" height="1" fill="#444"/><rect x="976" y="17" width="1" height="1" fill="#444"/><rect x="976" y="20" width="1" height="1" fill="#444"/><rect x="976" y="22" width="1" height="1" fill="#444"/><rect x="976" y="24" width="1" height="1" fill="#444"/><rect x="979" y="12" width="1" height="1" fill="#444"/><rect x="979" y="15" width="1" height="1" fill="#444"/><rect x="979" y="17" width="1" height="1" fill="#444"/><rect x="979" y="20" width="1" height="1" fill="#444"/><rect x="979" y="22" width="1" height="1" fill="#444"/><rect x="979" y="24" width="1" height="1" fill="#444"/>
 <path d="M1019.5 14.5H1034.5M1019.5 18H1034.5M1019.5 21.5H1034.5M1019.5 25H1034.5M1021.5 12V27M1025 12V27M1028.5 12V27M1032 12V27" stroke="#333" stroke-width="1.1"/>
 <path d="M1077.6 12.5V19M1074.3 15.7H1081" stroke="#222" stroke-width="1.1"/>
 <rect x="1075.8" y="21.5" width="11.6" height="4" stroke="#222" stroke-width="1.1"/>
 <path d="M1129.5 13V24.5H1142M1129.5 19.5H1135V24.5" stroke="#333" stroke-width="1.1"/>
 <path d="M1171 14.5H1179.5C1182.5 14.5 1184 16.5 1184 19.2C1184 22 1182.5 24 1179.5 24H1171" stroke="#333" stroke-width="3.4"/>
 <path d="M1171 14.5H1179.5C1182.5 14.5 1184 16.5 1184 19.2C1184 22 1182.5 24 1179.5 24H1171" stroke="#a9a9a9" stroke-width="1.6"/>
</svg>
<!-- nav cube -->
<svg style="left:1200px;top:820px" width="125" height="100">
 <defs>
  <radialGradient id="inn" cx="0.5" cy="0.3" r="0.75"><stop offset="0.5" stop-color="#fafafa"/><stop offset="1" stop-color="#cfcfcf"/></radialGradient>
 </defs>
 <ellipse cx="63.7" cy="60.2" rx="41" ry="24.2" fill="#bcbcbc"/>
 <ellipse cx="63.7" cy="58" rx="31.7" ry="18" fill="url(#inn)"/>
 <path d="M35.7 23.4L63.7 11.6L92.6 23.9L65 38Z" fill="#fff" stroke="#8a8a8a" stroke-width="0.8"/>
 <path d="M35.7 23.4L65 38L64.4 72L37.7 60.5Z" fill="#9a9a9a"/>
 <path d="M65 38L92.6 23.9L89.6 53.7L64.4 72Z" fill="#e6e6e6" stroke="#8a8a8a" stroke-width="0.6"/>
 <text x="63" y="26" font-size="6.5" fill="#a8a8a8" text-anchor="middle" transform="rotate(150 63 23.5)">TOP</text>
 <text x="50" y="53" font-size="6.5" fill="#bdbdbd" text-anchor="middle" transform="rotate(20 50 50)">LEFT</text>
 <text x="77" y="57" font-size="6.5" fill="#8c8c8c" text-anchor="middle" transform="rotate(-25 77 54)">FRONT</text>
 <text x="30.5" y="78" font-size="16" font-weight="bold" fill="#727272" text-anchor="middle" transform="rotate(-32 30.5 73)">W</text>
 <text x="98" y="78.5" font-size="15" font-weight="bold" fill="#727272" text-anchor="middle" transform="rotate(30 98 73.5)">S</text>
 <path d="M35 39L36.5 37M93 40L92 38" stroke="#777" stroke-width="1.5"/>
</svg>
</body></html>
